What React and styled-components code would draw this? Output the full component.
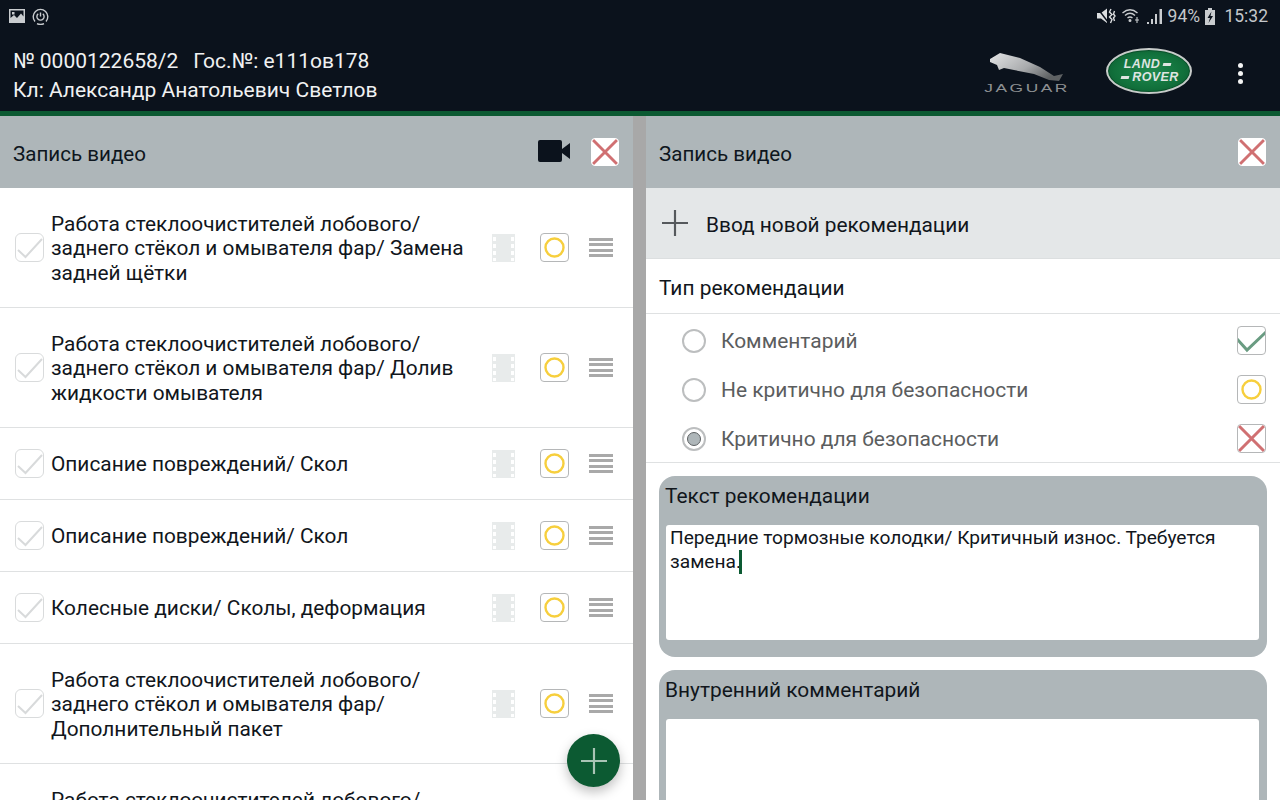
import React from 'react'
import styled, { createGlobalStyle } from 'styled-components'

const GlobalStyle = createGlobalStyle`
    html, body {
        margin: 0;
        padding: 0;
        height: 800px;
        overflow: hidden;
        background: #fff;
        font-family: Roboto, 'Liberation Sans', sans-serif;
    }
`

const Page = styled.div`
    width: 1280px;
    height: 800px;
    display: flex;
    flex-direction: column;
    overflow: hidden;
`

const TopArea = styled.header`
    height: 111px;
    flex: none;
    background: #0b121c;
    border-bottom: 5px solid #0c5a32;
    display: flex;
    flex-direction: column;
`

const StatusBar = styled.div`
    height: 32px;
    padding: 0 12px 0 9px;
    display: flex;
    align-items: center;
    justify-content: space-between;
    color: #c9cccf;
    flex: none;
`

const StatusGroup = styled.div`
    display: flex;
    align-items: center;
    gap: ${(p) => p.$gap || 6}px;
`

const StatusText = styled.span`
    font-size: 17.5px;
    color: #c4c7ca;
`

const HeaderRow = styled.div`
    flex: 1;
    display: flex;
    align-items: center;
    justify-content: space-between;
    padding: 0 37px 0 13px;
`

const OrderInfo = styled.div`
    color: #f0f1f2;
    font-size: 21px;
    line-height: 29px;
    padding-top: 9px;
`

const OrderNumber = styled.span`
    margin-right: 15px;
`

const Logos = styled.div`
    display: flex;
    align-items: center;
`

const JaguarLogo = styled.div`
    width: 84px;
    display: flex;
    flex-direction: column;
    align-items: center;
    margin-right: 37px;
    margin-top: 1px;
`

const JaguarWord = styled.span`
    font-family: 'Liberation Sans', sans-serif;
    font-size: 11px;
    line-height: 9px;
    letter-spacing: 1.6px;
    transform: scaleX(1.58);
    color: #8d9092;
    font-weight: 400;
    margin-top: 1px;
`

const RoverLogo = styled.div`
    width: 86px;
    height: 46px;
    border-radius: 50%;
    background: radial-gradient(ellipse at center, #1f8a4e 0%, #11703b 60%, #0a4f2a 100%);
    border: 2px solid #c7cbc9;
    box-sizing: border-box;
    box-shadow: inset 0 0 0 1px #0a4f2a;
    display: flex;
    flex-direction: column;
    align-items: center;
    justify-content: center;
    margin: 0 46px 2px 0;
`

const RoverLine = styled.div`
    display: flex;
    align-items: center;
    gap: 3px;
    height: 13px;
    margin-left: ${(p) => p.$shift}px;
`

const RoverWord = styled.span`
    font-family: 'Liberation Sans', sans-serif;
    font-size: 12.5px;
    line-height: 13px;
    font-weight: 700;
    font-style: italic;
    letter-spacing: 0.4px;
    color: #dfe5e1;
`

const RoverDash = styled.i`
    display: block;
    width: 8px;
    height: 3px;
    background: #dfe5e1;
    transform: skewX(-15deg);
`

const MenuDots = styled.div`
    display: flex;
    flex-direction: column;
    gap: 3px;
    margin-top: 4px;
`

const Dot = styled.i`
    display: block;
    width: 5px;
    height: 5px;
    border-radius: 50%;
    background: #f4f4f4;
`

const Panels = styled.div`
    flex: 1;
    min-height: 0;
    display: grid;
    grid-template-columns: 633px 634px;
    column-gap: 13px;
    background: #a8a8a8;
`

const Panel = styled.section`
    position: relative;
    background: #fff;
    overflow: hidden;
    display: flex;
    flex-direction: column;
`

const SectionBar = styled.div`
    height: 72px;
    flex: none;
    background: #aeb6b9;
    display: flex;
    align-items: center;
    padding: 0 14px 0 13px;
    color: #0e1620;
    font-size: 20.6px;
`

const SectionTitle = styled.div`
    flex: 1;
    padding-top: 3px;
`

const VideoIcon = styled.svg`
    width: 32px;
    height: 22px;
    margin: 0 21px 2px 0;
`

const Box = styled.span`
    width: ${(p) => p.$size || 27}px;
    height: ${(p) => p.$size || 27}px;
    flex: none;
    display: flex;
    align-items: center;
    justify-content: center;
    box-sizing: border-box;
    background: #fff;
    border: 1px solid ${(p) => p.$border || '#b5b7b8'};
    border-radius: ${(p) => p.$radius || 4}px;
    overflow: hidden;

    svg {
        display: block;
    }
`

const Row = styled.div`
    height: ${(p) => p.$lines * 24 + 48}px;
    flex: none;
    box-sizing: border-box;
    border-bottom: 1px solid #dfe1e2;
    display: flex;
    align-items: center;
    padding-left: 15px;
`

const RowText = styled.div`
    width: 424px;
    margin-left: 7px;
    padding-top: 2px;
    flex: none;
    font-size: 20.85px;
    line-height: 24.5px;
    color: #11161c;
`

const FilmWrap = styled.svg`
    width: 24px;
    height: 28px;
    margin-left: 16px;
    flex: none;
`

const CircleWrap = styled.div`
    margin-left: 25px;
    flex: none;
`

const Burger = styled.div`
    margin-left: 20px;
    width: 24px;
    display: flex;
    flex-direction: column;
    gap: 2.5px;
    flex: none;
`

const BurgerLine = styled.i`
    display: block;
    height: 3px;
    background: #a9a9a9;
`

const Fab = styled.button`
    position: absolute;
    left: 567px;
    top: 618px;
    width: 53px;
    height: 53px;
    padding: 0;
    border: none;
    border-radius: 50%;
    background: #0c5a32;
    box-shadow: 0 5px 12px rgba(0, 0, 0, 0.25);
    display: flex;
    align-items: center;
    justify-content: center;
`

const AddBar = styled.div`
    height: 71px;
    flex: none;
    box-sizing: border-box;
    background: #e4e7e8;
    border-bottom: 1px solid #dcdfe0;
    display: flex;
    align-items: center;
    padding-left: 16px;
    gap: 18px;
    font-size: 20.85px;
    color: #11161c;
`

const AddLabel = styled.span`
    padding-top: 3px;
`

const TypeTitle = styled.div`
    height: 55px;
    flex: none;
    box-sizing: border-box;
    border-bottom: 1px solid #dfe1e2;
    display: flex;
    align-items: center;
    padding: 3px 0 0 13px;
    font-size: 20.9px;
    color: #11161c;
`

const RadioList = styled.div`
    flex: none;
    box-sizing: border-box;
    height: 149px;
    padding-top: 2px;
    border-bottom: 1px solid #dfe1e2;
`

const RadioRow = styled.div`
    height: 49px;
    display: flex;
    align-items: center;
    padding: 0 14px 0 36px;
    font-size: 20.95px;
    color: #5b5d5e;
`

const RadioMark = styled.span`
    width: 24px;
    height: 24px;
    box-sizing: border-box;
    flex: none;
    border-radius: 50%;
    border: 2px solid #bcbebf;
    background: #fff;
    margin-right: 15px;
    display: flex;
    align-items: center;
    justify-content: center;

    &::after {
        content: '';
        display: ${(p) => (p.$on ? 'block' : 'none')};
        width: 14px;
        height: 14px;
        box-sizing: border-box;
        border-radius: 50%;
        background: #aeb6b9;
        border: 1px solid #5d6163;
    }
`

const RadioLabel = styled.span`
    flex: 1;
`

const Card = styled.div`
    flex: none;
    margin: ${(p) => p.$top}px 13px 0;
    height: ${(p) => p.$height}px;
    box-sizing: border-box;
    border-radius: 16px;
    background: #aeb6b9;
    padding: 0 8px 0 7px;
    display: flex;
    flex-direction: column;
`

const CardTitle = styled.div`
    height: 42px;
    flex: none;
    padding-top: 6px;
    box-sizing: border-box;
    margin-left: -1px;
    font-size: 20.9px;
    line-height: 28px;
    color: #11161c;
    margin-bottom: 7px;
`

const TextBox = styled.div`
    height: ${(p) => p.$height}px;
    flex: none;
    box-sizing: border-box;
    background: #fff;
    border-radius: 3px;
    padding: 1px 4px 0;
    font-size: 19.15px;
    line-height: 24px;
    color: #11161c;
`

const Caret = styled.span`
    display: inline-block;
    width: 3px;
    height: 24px;
    margin-left: -2px;
    background: #0c5a32;
    vertical-align: -6px;
`

const CrossIcon = ({ size = 27 }) => (
    <svg width={size} height={size} viewBox="0 0 27 27">
        <path d="M1 1 L26 26 M26 1 L1 26" stroke="#d07072" strokeWidth="3" />
    </svg>
)

const PanelCross = () => (
    <Box $size={28} $border="#fff">
        <CrossIcon size={28} />
    </Box>
)

const RingIcon = () => (
    <svg width="27" height="27" viewBox="0 0 27 27">
        <circle cx="13.5" cy="13.5" r="9" fill="none" stroke="#f7cf3d" strokeWidth="2.4" />
    </svg>
)

const FadedTick = () => (
    <svg width="27" height="27" viewBox="0 0 27 27">
        <path d="M2 16 L9.5 23 L26 5" fill="none" stroke="#d8dadb" strokeWidth="2" />
    </svg>
)

const GreenTick = () => (
    <svg width="27" height="27" viewBox="0 0 27 27">
        <path d="M-1 12 L9 23 L28 5" fill="none" stroke="#6a9c82" strokeWidth="3" />
    </svg>
)

const FilmIcon = () => (
    <FilmWrap viewBox="0 0 24 28">
        <path
            fillRule="evenodd"
            fill="#e8ebeb"
            d="M1 0H24V28H1Z M2 3V7H5V3Z M2 10V14H5V10Z M2 17V21H5V17Z M2 24V27H5V24Z M20 3V7H23V3Z M20 10V14H23V10Z M20 17V21H23V17Z M20 24V27H23V24Z"
        />
    </FilmWrap>
)

const PlusIcon = ({ size, color, width }) => (
    <svg width={size} height={size} viewBox="0 0 24 24">
        <path d="M12 0V24 M0 12H24" stroke={color} strokeWidth={width} />
    </svg>
)

const WIPER = 'Работа стеклоочистителей лобового/ заднего стёкол и омывателя фар/'

const rows = [
    { lines: 3, text: `${WIPER} Замена задней щётки` },
    { lines: 3, text: `${WIPER} Долив жидкости омывателя` },
    { lines: 1, text: 'Описание повреждений/ Скол' },
    { lines: 1, text: 'Описание повреждений/ Скол' },
    { lines: 1, text: 'Колесные диски/ Сколы, деформация' },
    { lines: 3, text: `${WIPER} Дополнительный пакет` },
    { lines: 3, text: `${WIPER} Замена задней щётки` },
]

const App = () => (
    <Page>
        <GlobalStyle />
        <TopArea>
            <StatusBar>
                <StatusGroup $gap={7}>
                    <svg width="16" height="14" viewBox="0 0 16 14">
                        <path
                            fillRule="evenodd"
                            fill="#c9cccf"
                            d="M0 0H16V14H0Z M1.5 1.5V9L5 6L8 9L12 4.5L14.5 7.5V1.5Z M3 3H5.5V5.5H3Z"
                        />
                    </svg>
                    <svg width="17" height="17" viewBox="0 0 17 17" fill="none" stroke="#c9cccf">
                        <path d="M3 13.5 A7.3 7.3 0 1 1 14 13.5" strokeWidth="1.4" />
                        <path d="M5 15.6 A7.8 7.8 0 0 0 12 15.6" strokeWidth="1.4" />
                        <path d="M6.2 5.8 A3.6 3.6 0 1 0 10.8 5.8 M8.5 4.5V8.5" strokeWidth="1.4" />
                    </svg>
                </StatusGroup>
                <StatusGroup $gap={5}>
                    <svg width="20" height="16" viewBox="0 0 20 16">
                        <path d="M0 5H4L10 0.5V15L4 10.5H0Z" fill="#dcdee0" />
                        <path d="M1 1L11 14" stroke="#0b121c" strokeWidth="1.4" />
                        <path d="M14 1L12.5 4L15 6.5L12.5 9L15 11.5L13.5 15 M17.5 3L16.5 6L18 8L16.5 10L17.5 13" stroke="#dcdee0" strokeWidth="1.4" fill="none" />
                    </svg>
                    <svg width="20" height="16" viewBox="0 0 20 16" fill="none" stroke="#c9cccf" strokeWidth="1.4">
                        <path d="M0.5 5Q8 -1.5 15.5 5" />
                        <path d="M3 7.5Q8 3 13 7.5" />
                        <path d="M5.5 10Q8 8 10.5 10" />
                        <circle cx="8" cy="12.5" r="0.8" fill="#c9cccf" />
                        <path d="M15 9V15 M13 12H17" strokeWidth="1.1" />
                    </svg>
                    <svg width="16" height="17" viewBox="0 0 16 17" fill="#c9cccf">
                        <path d="M0 14H2V16H0Z M4 11H6V16H4Z M8 6H10V16H8Z M12.5 1H15V16H12.5Z" />
                    </svg>
                    <StatusText>94%</StatusText>
                    <svg width="10" height="17" viewBox="0 0 10 17">
                        <path d="M3 0H7V2H10V17H0V2H3Z" fill="#c9cccf" />
                        <path d="M6.5 3.5L2.5 10H5L3.5 15L8 8H5.5Z" fill="#0b121c" />
                    </svg>
                    <StatusText>&nbsp;15:32</StatusText>
                </StatusGroup>
            </StatusBar>
            <HeaderRow>
                <OrderInfo>
                    <div>
                        <OrderNumber>№ 0000122658/2</OrderNumber>Гос.№: е111ов178
                    </div>
                    <div>Кл: Александр Анатольевич Светлов</div>
                </OrderInfo>
                <Logos>
                    <JaguarLogo>
                        <svg width="76" height="31" viewBox="0 0 76 31">
                            <defs>
                                <linearGradient id="cat" x1="0" y1="0" x2="1" y2="0.5">
                                    <stop offset="0" stopColor="#e4e5e6" />
                                    <stop offset="0.6" stopColor="#a9abad" />
                                    <stop offset="1" stopColor="#5e6163" />
                                </linearGradient>
                            </defs>
                            <path
                                fill="url(#cat)"
                                d="M1 7L11 1L31 6L51 15L65 24L74 22L70 29L60 28L45 22L25 18L15 16L10 18L8 13L1 10Z"
                            />
                        </svg>
                        <JaguarWord>JAGUAR</JaguarWord>
                    </JaguarLogo>
                    <RoverLogo>
                        <RoverLine $shift={-3}>
                            <RoverWord>LAND</RoverWord>
                            <RoverDash />
                        </RoverLine>
                        <RoverLine $shift={2}>
                            <RoverDash />
                            <RoverWord>ROVER</RoverWord>
                        </RoverLine>
                    </RoverLogo>
                    <MenuDots>
                        <Dot />
                        <Dot />
                        <Dot />
                    </MenuDots>
                </Logos>
            </HeaderRow>
        </TopArea>
        <Panels>
            <Panel>
                <SectionBar>
                    <SectionTitle>Запись видео</SectionTitle>
                    <VideoIcon viewBox="0 0 32 22">
                        <path d="M2 0H22A2 2 0 0 1 24 2V20A2 2 0 0 1 22 22H2A2 2 0 0 1 0 20V2A2 2 0 0 1 2 0Z M24 9L32 3V19L24 13Z" fill="#0b121c" />
                    </VideoIcon>
                    <PanelCross />
                </SectionBar>
                {rows.map((row, i) => (
                    <Row key={i} $lines={row.lines}>
                        <Box $size={29} $border="#d9dbdc" $radius={6}>
                            <FadedTick />
                        </Box>
                        <RowText>{row.text}</RowText>
                        <FilmIcon />
                        <CircleWrap>
                            <Box $size={29}>
                                <RingIcon />
                            </Box>
                        </CircleWrap>
                        <Burger>
                            <BurgerLine />
                            <BurgerLine />
                            <BurgerLine />
                            <BurgerLine />
                        </Burger>
                    </Row>
                ))}
                <Fab aria-label="Добавить">
                    <PlusIcon size={26} color="#a9c4b5" width="2" />
                </Fab>
            </Panel>
            <Panel>
                <SectionBar>
                    <SectionTitle>Запись видео</SectionTitle>
                    <PanelCross />
                </SectionBar>
                <AddBar>
                    <PlusIcon size={26} color="#55595c" width="2" />
                    <AddLabel>Ввод новой рекомендации</AddLabel>
                </AddBar>
                <TypeTitle>Тип рекомендации</TypeTitle>
                <RadioList>
                    <RadioRow>
                        <RadioMark />
                        <RadioLabel>Комментарий</RadioLabel>
                        <Box $size={29}>
                            <GreenTick />
                        </Box>
                    </RadioRow>
                    <RadioRow>
                        <RadioMark />
                        <RadioLabel>Не критично для безопасности</RadioLabel>
                        <Box $size={29}>
                            <RingIcon />
                        </Box>
                    </RadioRow>
                    <RadioRow>
                        <RadioMark $on />
                        <RadioLabel>Критично для безопасности</RadioLabel>
                        <Box $size={29}>
                            <CrossIcon />
                        </Box>
                    </RadioRow>
                </RadioList>
                <Card $top={13} $height={181}>
                    <CardTitle>Текст рекомендации</CardTitle>
                    <TextBox $height={115}>
                        Передние тормозные колодки/ Критичный износ. Требуется замена.
                        <Caret />
                    </TextBox>
                </Card>
                <Card $top={13} $height={200}>
                    <CardTitle>Внутренний комментарий</CardTitle>
                    <TextBox $height={150} />
                </Card>
            </Panel>
        </Panels>
    </Page>
)

export default App
